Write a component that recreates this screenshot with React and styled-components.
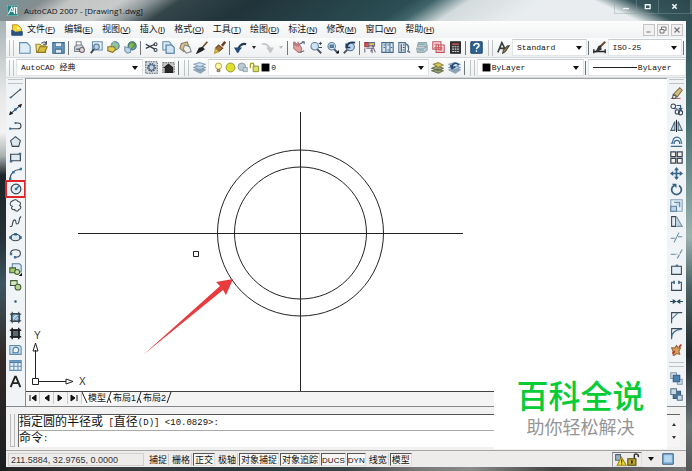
import React from "react";
import styled, { createGlobalStyle } from "styled-components";

const SANS = '"Liberation Sans", "Noto Sans CJK SC", sans-serif';
const MONO = '"Liberation Mono", "Noto Sans CJK SC", monospace';

const GlobalStyle = createGlobalStyle`
  *, *::before, *::after { box-sizing: border-box; }
  body { margin: 0; font-family: ${SANS}; color: #111; }
  button, select, input { font: inherit; color: inherit; margin: 0; padding: 0; border: 0; background: none; border-radius: 0; }
`;

const Frame = styled.div`
  position: relative;
  min-height: 100vh;
  display: flex;
  flex-direction: column;
  background:
    linear-gradient(#96a5a8, #e8e8e8 20%, #f2f2f2 28%, #a9b0b0 33%, #1c2528 37%, #243036 50%, #3d5560 60%, #332a28 75%, #1a1d1f) left / 6px 100% no-repeat,
    linear-gradient(#2c4b50, #466e70 25%, #9cb2ae 50%, #4e6668 60%, #20292c 75%, #6b7375 90%, #555) right / 6px 100% no-repeat,
    linear-gradient(90deg, #222, #3b3f40 15%, #2c3b3e 35%, #3a4547 50%, #777 60%, #8a8a8a 68%, #444 80%, #777) bottom / 100% 6px no-repeat,
    #2b3a3e;
  padding: 0 6px 6px;
`;

const TitleBar = styled.header`
  height: 21px;
  flex: none;
  margin: 0 -6px;
  display: flex;
  align-items: center;
  gap: 6px;
  padding-left: 7px;
  background:
    linear-gradient(25deg, transparent 56%, #35555a 72%, #2b474c) right / 180px 100% no-repeat,
    linear-gradient(147deg, #7b9296 2%, #848c8e 6%, #c3c5c5 10%, #c9cbcb 17%, #8d979a 21%, #35464b 25%, #20343a 35%, #2b4e54 57%, #40656a 60%, #d3dbdd 65%, #e9edef 75%);
`;

const Title = styled.h1`
  margin: 0;
  flex: 1;
  font: 400 8px/12px "Open Sans", sans-serif;
  color: #101517;
  white-space: nowrap;
`;

const Captions = styled.div`
  display: flex;
  align-self: flex-start;
  border: 1px solid #8d9fa366;
  border-top: 0;
`;

const CaptionButton = styled.button`
  width: ${(p) => (p.$wide ? 32 : 22)}px;
  height: 13px;
  display: grid;
  place-items: center;
  color: #f2f6f6;
  border-right: 1px solid #8d9fa366;
`;

const MenuBar = styled.nav`
  height: 17px;
  flex: none;
  display: flex;
  align-items: center;
  padding: 0 3px 0 5px;
  background: linear-gradient(#fdfdfd, #f0f2f3);
`;

const MenuList = styled.div`
  flex: 1;
  display: flex;
  gap: 9px;
  padding-left: 4px;
`;

const MenuButton = styled.button`
  font-size: 9px;
  line-height: 14px;
  white-space: nowrap;
`;

const Mnemonic = styled.span`
  font-size: 8px;
  u { text-underline-offset: 1px; }
`;

const DocButtons = styled.div`
  display: flex;
  gap: 2px;
`;

const DocButton = styled.button`
  width: 12px;
  height: 12px;
  display: grid;
  place-items: center;
  background: #f1f1f1;
  border: 1px solid #c4c4c4;
  color: #777;
`;

const ToolRow = styled.div`
  height: ${(p) => p.$height}px;
  flex: none;
  display: flex;
  align-items: center;
  overflow: hidden;
  background: linear-gradient(#fcfdfd, #eef0f1);
  border-bottom: 1px solid #d5d8da;
`;

const Group = styled.div`
  display: flex;
  align-items: center;
  flex: ${(p) => (p.$grow ? p.$grow : "none")};
  min-width: 0;
`;

const Grip = styled.i`
  flex: none;
  width: 5px;
  height: 16px;
  margin: 0 2px 0 3px;
  border: solid #bfc3c6;
  border-width: 0 1px;
`;

const SideGrip = styled.i`
  flex: none;
  height: 5px;
  margin: ${(p) => (p.$spaced ? "5px 2px 3px" : "1px 2px")};
  border: solid #bfc3c6;
  border-width: 1px 0;
`;

const Divider = styled.i`
  flex: none;
  width: 1px;
  height: 14px;
  margin: 0 2px 0 1px;
  background: #70767a;
`;

const Tool = styled.button`
  flex: none;
  width: ${(p) => (p.$narrow ? 10 : 17)}px;
  height: 16px;
  display: grid;
  place-items: center;
  outline: ${(p) => (p.$marked ? "2px solid #e0262d" : "none")};
  outline-offset: -1px;
  svg { display: block; }
`;

const Combo = styled.label`
  flex: ${(p) => p.$flex || "1"};
  min-width: 0;
  height: 17px;
  display: flex;
  align-items: center;
  gap: 1px;
  padding: 0 4px;
  background: #fff;
  border: 1px solid #e2e5e7;
  border-top-color: #c8ccd0;
`;

const ComboSelect = styled.select`
  flex: 1;
  min-width: 0;
  height: 15px;
  appearance: none;
  font-family: ${MONO};
  font-size: 8px;
  line-height: 15px;
`;

const Workspace = styled.main`
  flex: 1;
  min-height: 0;
  display: flex;
  border-bottom: 1px solid #85888a;
`;

const SideBar = styled.aside`
  flex: none;
  width: 19px;
  display: flex;
  flex-direction: column;
  align-items: stretch;
  background: #f0f4f7;
  button { width: 100%; }
`;

const DrawingPane = styled.section`
  flex: 1;
  min-width: 0;
  display: flex;
  flex-direction: column;
  border-left: 1px solid #868a8c;
  border-top: 1px solid #a2a5a6;
  background: #f4f4f4;
`;

const Canvas = styled.div`
  flex: 1;
  min-height: 0;
  overflow: hidden;
  background: #fff;
  border-bottom: 1px solid #444;
  svg { display: block; }
`;

const TabStrip = styled.div`
  flex: none;
  height: 14px;
  display: flex;
  align-items: flex-start;
`;

const NavButton = styled.button`
  width: 14px;
  height: 12px;
  display: grid;
  place-items: center;
  border-right: 1px solid #ccc;
`;

const LayoutTab = styled.button`
  height: 12px;
  display: flex;
  align-items: center;
  font-size: 9px;
  line-height: 11px;
  background: ${(p) => (p.$active ? "#fff" : "transparent")};
  svg { display: block; }
`;

const CommandPanel = styled.section`
  flex: none;
  display: flex;
  background: #f1f1f1;
  padding: 7px 6px 3px 4px;
  border-bottom: 1px solid #a5a5a5;
`;

const CommandGrip = styled.i`
  width: 5px;
  margin-right: 3px;
  border: solid #bbb;
  border-width: 0 1px 1px;
`;

const CommandBody = styled.div`
  flex: 1;
  min-width: 0;
  background: #fff;
  border-top: 1px solid #555;
  border-left: 1px solid #666;
`;

const CommandLine = styled.div`
  height: 16px;
  display: flex;
  align-items: center;
  font-family: ${MONO};
  font-size: 12px;
  line-height: 16px;
  white-space: pre;
  border-bottom: ${(p) => (p.$last ? "0" : "1px solid #aaa")};
  small { font-size: 9px; }
`;

const CommandInput = styled.input`
  flex: 1;
  min-width: 0;
  height: 14px;
  outline: none;
`;

const ScrollColumn = styled.div`
  width: 13px;
  border-top: 1px solid #666;
  display: flex;
  flex-direction: column;
  justify-content: space-evenly;
  background: #f5f5f5;
`;

const ScrollButton = styled.button`
  height: 8px;
  display: grid;
  place-items: center;
`;

const StatusBar = styled.footer`
  flex: none;
  height: 16px;
  display: flex;
  align-items: center;
  padding: 0 10px 0 2px;
  background: #eeecea;
  font-size: 9px;
  line-height: 13px;
  white-space: nowrap;
`;

const Coordinates = styled.output`
  width: 136px;
  height: 13px;
  padding-left: 2px;
  border: 1px solid #d2d0ce;
  color: #333;
`;

const StatusToggles = styled.div`
  flex: 1;
  display: flex;
  gap: 1px;
  padding-left: 3px;
`;

const StatusToggle = styled.button`
  height: 13px;
  padding: ${(p) => (p.$latin ? "0" : "0 1px")};
  min-width: ${(p) => (p.$latin ? 18 : 22)}px;
  font-size: ${(p) => (p.$latin ? 8 : 9)}px;
  border: 1px solid;
  border-color: ${(p) => (p.$on ? "#555 #ddd #ddd #555" : "transparent #ccc transparent transparent")};
  background: ${(p) => (p.$on ? "#f7f6f5" : "transparent")};
`;

const Tray = styled.div`
  display: flex;
  align-items: center;
  border: 1px solid;
  border-color: #777 #ddd #ddd #999;
  height: 15px;
  padding: 0 1px;
`;

const Watermark = styled.div`
  position: absolute;
  right: 25px;
  bottom: 24px;
  width: 173px;
  height: 70px;
  background: #fff;
  font-family: ${SANS};
  text-align: center;
  strong {
    display: block;
    font-size: 32px;
    line-height: 37px;
    font-weight: 500;
    color: #06cc38;
  }
  span {
    display: block;
    font-size: 18px;
    line-height: 24px;
    color: #959595;
  }
`;

const Svg = ({ children, size = 14, box = 16 }) => (
  <svg width={size} height={size} viewBox={`0 0 ${box} ${box}`} fill="none" stroke="#3a4650" strokeWidth="1.3" aria-hidden="true">
    {children}
  </svg>
);

const Caret = () => (
  <svg width="6" height="4" viewBox="0 0 6 4" aria-hidden="true"><path d="M0 0h6L3 4z" fill="#111" /></svg>
);

const SHEET = <path d="M2 2h9l4 4v9H2z" fill="#dcecf8" stroke="#5e8db5" />;
const LENS = <><path d="M10 10l5 5" stroke="#4a5560" strokeWidth="2.4" /><circle cx="7" cy="6.5" r="4.6" fill="#cfe4f5" stroke="#5d7f9e" /></>;
const LAYERS = <><path d="M1 11l7-2 7 2-6 4z" fill="#8ba4b8" stroke="#8ea3b3" /><path d="M1 8l7-3 7 3-6 3z" fill="#b4cade" stroke="#7f9ab3" /><path d="M1 4l7-2 7 2-6 3z" fill="#d5e4f2" stroke="#8ca8c2" /></>;

const ICONS = {
  logo: <><rect x="0" y="0" width="16" height="16" fill="#1e8583" stroke="#b8d8d4" /><path d="M2 13L7 3l3 8M5 9h5M11 2v11M14 3v10M9 4h5" stroke="#fff" strokeWidth="1.5" /></>,
  doc: <><path d="M2 1h7l5 5v8H2z" fill="#f5d335" stroke="#bc9a22" /><path d="M1 8l5 3 9-1v5H1z" fill="#28527f" stroke="#28527f" /><path d="M8 2l5 5H8z" fill="#fff3a4" stroke="none" /></>,
  blank: SHEET,
  open: <><path d="M1 4h5l2 2h5v8H2z" fill="#efdc78" stroke="#9a8b32" /><path d="M3 14l3-7h9l-3 7z" fill="#d8bd3d" stroke="#8d7a25" /><path d="M8 3c3-3 5-2 6 1M14 0v4h-4" stroke="#445" /></>,
  save: <><path d="M1 2h14v13H1z" fill="#6fa3c7" stroke="#31638a" /><path d="M4 2h8v5H4z" fill="#e5f0f7" stroke="#4d7998" /><path d="M4 10h8v5H4z" fill="#dfe9f0" stroke="#3f6a8a" /></>,
  print: <><path d="M4 1h6v6H4z" fill="#fff" stroke="#81868b" /><path d="M2 7l3-2h6l2 3v5H2z" fill="#ced4da" stroke="#7c858c" /><circle cx="11" cy="11" r="3" fill="#e0dfe1" stroke="#765e70" /><path d="M4 10h4" /></>,
  preview: <><path d="M3 1h12v10H3z" fill="#e5f2fc" stroke="#638bae" /><circle cx="8" cy="7" r="3.4" fill="#b6d1e7" stroke="#58758e" /><path d="M5 10l-4 5" strokeWidth="2.3" /></>,
  publish: <><circle cx="10" cy="6" r="5" fill="#79b4d6" stroke="#5b7d93" /><path d="M7 2c4 0 6 3 5 8M5 5h9" stroke="#a5cf66" /><path d="M1 7h7l3 3-4 4-6-2z" fill="#e5cd4d" stroke="#83752c" /></>,
  globe: <><circle cx="10" cy="6" r="5" fill="#68a7ba" stroke="#33677c" /><path d="M6 5c2-5 7-3 7 1-3 0-2 4-5 4" fill="#89b958" stroke="#608c3a" /><path d="M1 7l7 2v5l-4 1-3-3z" fill="#b9d5e6" stroke="#7295ab" /></>,
  cut: <><path d="M1 4l11 6M1 9l11-5" stroke="#353b40" strokeWidth="1.6" /><circle cx="13" cy="4" r="1.8" /><circle cx="13" cy="11" r="1.8" /></>,
  copy: <><path d="M1 1h8l2 2v8H1z" fill="#dcebf6" stroke="#648bad" /><path d="M5 5h7l3 3v7H5z" fill="#d0e4f3" stroke="#457397" /></>,
  paste: <><path d="M3 3l7-2 3 8-7 4-5-4z" fill="#d6c38b" stroke="#83775a" /><path d="M7 5l6 2 2 6-6 2-4-5z" fill="#f1f2ed" stroke="#83858a" /></>,
  brush: <><path d="M14 1L7 9" stroke="#6a4928" strokeWidth="2" /><path d="M8 8l-4 1-3 6 6-3 3-2z" fill="#222" stroke="#222" /></>,
  match: <><path d="M15 1l-4 5" stroke="#6d3a25" strokeWidth="3" /><path d="M7 5l5 4-5 4-4-4z" fill="#a66c3b" stroke="#704724" /><path d="M3 9l4 4-5 2z" fill="#e3cd4d" stroke="#b29732" /></>,
  undo: <><path d="M5 14C4 8 9 2 15 4" stroke="#233852" strokeWidth="2.6" /><path d="M0 8h10L4 15z" fill="#234a7d" stroke="none" /></>,
  redo: <><path d="M11 14C12 8 7 2 1 4" stroke="#c2c6ca" strokeWidth="2.2" /><path d="M6 8h10l-4 7z" fill="#c2c6ca" stroke="none" /></>,
  pan: <><path d="M2 2l4 5-3-6 5 5-1-5 5 8-1 5H8L2 9z" fill="#e0a09e" stroke="#b9777d" /><path d="M9 4l6-3M10 14l5-2M12 1h3v3" stroke="#52667b" /></>,
  zoomRt: <>{LENS}<path d="M12 3h4M14 1v4M12 8h4" strokeWidth="1.2" /></>,
  zoomWin: <>{LENS}<path d="M5 5h4v3H5z" fill="#6487a6" stroke="#4c6f8e" /><path d="M12 15h4v-4z" fill="#111" stroke="none" /></>,
  zoomPrev: <><path d="M6 10l-5 5" stroke="#4b5864" strokeWidth="2.4" /><circle cx="9" cy="7" r="5" fill="#b9d5ec" stroke="#516d87" /><path d="M5 7c1-5 5-6 10-5M4 3v5h5" stroke="#223c5d" strokeWidth="2" /></>,
  props: <><path d="M1 2h5v5H1z" fill="#da5055" stroke="#9a3642" /><path d="M6 2h7v4H6z" fill="#efc64a" stroke="#627495" /><path d="M3 9h7v6M1 9v5M10 5l4 9M13 5l-5 8" stroke="#6e647c" /></>,
  center: <><path d="M1 2h14v12H1z" fill="#d7e7f3" stroke="#46698b" /><path d="M6 2v12M11 2v12M3 5h2M8 5h2M3 8h2M12 8h2M8 11h2" stroke="#4e6f90" /></>,
  palettes: <><path d="M1 2h8v12H1z" fill="#e1edf6" stroke="#4e7494" /><path d="M4 4v9M6 5h2M6 8h2M6 11h2" /><path d="M9 3c5 1 5 6 3 10l3 1" fill="#9db6ca" stroke="#436582" /></>,
  sheets: <><path d="M4 2h10l1 4-4 1H3zM2 9h9l4-2v4l-4 3H3z" fill="#b9cfd6" stroke="#91a8ae" /><path d="M4 4h8M4 11h7" stroke="#7797a4" /></>,
  markup: <><path d="M1 1h10v9H1zM5 5h10v9H5z" fill="#f7dfe1" stroke="#c1525c" /><path d="M3 4h5v4H3M8 8h4v3H8z" stroke="#d06069" /></>,
  calc: <><rect x="2" y="1" width="12" height="14" fill="#39393c" stroke="#222" /><path d="M4 3h8v2H4z" fill="#bb5550" stroke="none" /><path d="M4 7h8M4 10h8M4 13h8" stroke="#ddd" strokeDasharray="2 1" /></>,
  help: <><rect x="1" y="1" width="14" height="14" rx="1" fill="#2b6598" stroke="#214567" /><path d="M5 6c0-4 7-4 6 0-1 2-3 2-3 4" stroke="#fff" strokeWidth="2" /><circle cx="8" cy="12.5" r="1" fill="#fff" stroke="none" /></>,
  textStyle: <><path d="M1 14L6 2l5 10M3 9h7" strokeWidth="2" stroke="#353c42" /><path d="M15 6l-5 7-3 2 1-4 5-5z" fill="#ab9250" stroke="#4c4433" /></>,
  dimStyle: <><path d="M1 13h14M1 10v5M15 10v5" stroke="#222" strokeWidth="1.7" /><path d="M15 1L8 8" stroke="#6b4d2d" strokeWidth="2.5" /><path d="M9 6l1 4-6 3 3-6z" fill="#343434" stroke="#333" /></>,
  gear: <><path d="M1 1h14v14H1z" fill="#d9dfe4" strokeDasharray="2 1" stroke="#55606b" /><circle cx="8" cy="8" r="4.500" stroke="#4a6078" strokeWidth="2" strokeDasharray="2 1" /><circle cx="8" cy="8" r="3.300" fill="#c3d4e2" stroke="#4f6880" /></>,
  home: <><path d="M1 2h14v12H1z" fill="#c9c9c9" stroke="#777" strokeDasharray="2 1" /><path d="M3 8l5-4 5 4v6H4V8z" fill="#292929" stroke="#222" /></>,
  layers: LAYERS,
  bulb: <><circle cx="8" cy="6" r="4.5" fill="#fff7ad" stroke="#b59b35" /><path d="M6 11h4v3H6z" fill="#b4a87a" stroke="#766e50" /></>,
  sun: <circle cx="8" cy="8" r="6.500" fill="#dede2c" stroke="#8b9035" />,
  freeze: <><circle cx="7" cy="7" r="5.5" fill="#b9cbd0" stroke="#829a9e" /><path d="M9 8h6v6H9z" fill="#cad5dc" stroke="#8b9fac" /></>,
  lock: <><path d="M2 9V4c0-3 5-3 5 0v5" stroke="#a6a51d" strokeWidth="2" /><path d="M6 6h8v8H6z" fill="#dce162" stroke="#86882b" /></>,
  swatch: <path d="M1 1h14v14H1z" fill="#000" stroke="none" />,
  layerPrev: <><path d="M1 12l7-2 7 2-6 3zM1 9l7-3 7 3-6 3z" fill="#9ca870" stroke="#687151" /><path d="M3 4l6-2 6 3-6 3z" fill="#d8c957" stroke="#8d8442" /></>,
  layerBack: <>{LAYERS}<path d="M5 8c-1-5 6-7 8-3M3 5l2 4 4-2" stroke="#264a73" strokeWidth="2" /></>,
  line: <><path d="M2 13L14 3" /><circle cx="2" cy="13" r="1.3" fill="#486b8b" stroke="none" /><circle cx="14" cy="3" r="1.3" fill="#486b8b" stroke="none" /></>,
  xline: <><path d="M1 14L15 2" strokeWidth="1.500" /><path d="M1 14l1-3 2 2zM15 2l-1 3-2-2z" fill="#222" stroke="#222" /><circle cx="8" cy="8" r="1.700" fill="#3173ab" stroke="none" /></>,
  pline: <><path d="M1 12h10c5 0 5-7 0-7H8" /><circle cx="8" cy="5" r="1.4" fill="#3173ab" stroke="none" /><circle cx="1.5" cy="12" r="1.4" fill="#3173ab" stroke="none" /></>,
  polygon: <path d="M8 2l6 5-2 7H4L2 7z" fill="#dce8ee" />,
  rect: <><path d="M2 4h12v8H2z" fill="#dfebf3" strokeWidth="1.5" /><path d="M1 11h3v3H1zM12 2h3v3h-3z" fill="#466a89" stroke="none" /></>,
  arc: <><path d="M1 15C2 7 7 3 14 3" /><path d="M0 13h3v3H0zM4 5h3v3H4zM13 1h3v3h-3z" fill="#3975a6" stroke="none" /></>,
  circle: <><circle cx="8" cy="8" r="6.500" fill="#e1ecf4" strokeWidth="1.600" /><path d="M8 8l4-4" stroke="#346e9d" strokeWidth="2" /><circle cx="8" cy="8" r="1.8" fill="#346e9d" stroke="none" /></>,
  cloud: <path d="M5 2c2-2 5-1 6 1 3 0 4 3 2 5 3 2 1 5-1 5-1 3-5 2-5 0-3 1-5-2-3-4-4-1-3-6 1-7z" fill="#f0f4f6" />,
  spline: <path d="M1 14c5 2 2-8 6-8 3 0 0 5 3 5 4 0 1-8 5-9" />,
  ellipse: <><ellipse cx="8" cy="8" rx="6" ry="4" fill="#dce9f2" strokeWidth="1.5" /><path d="M1 7h2v2H1zM13 7h2v2h-2zM7 3h2v2H7z" fill="#2f648c" stroke="#2f648c" /></>,
  ellArc: <><path d="M2 8c0-6 12-6 12 0 0 4-4 5-7 4" /><path d="M1 7h3v3H1zM6 11h3v3H6z" fill="#3f7199" stroke="none" /></>,
  insert: <><path d="M4 1h9l2 2v8H4z" fill="#dce9f3" stroke="#587e9d" /><path d="M1 6h7v6H1z" fill="#a4c873" stroke="#3d612b" /><circle cx="10" cy="11" r="3" fill="#cee0a8" stroke="#3c6230" /><path d="M12 16h4v-4z" fill="#111" stroke="none" /></>,
  block: <><path d="M2 2h8v6H2z" fill="#dae7c4" stroke="#42633a" /><circle cx="11" cy="10" r="3.600" fill="#b6d390" stroke="#42633a" /><path d="M1 8h6" /></>,
  point: <circle cx="8" cy="8" r="1.5" fill="#225c8d" stroke="none" />,
  hatch: <><path d="M3 3h10v10H3z" fill="#bcd8ed" /><path d="M1 4h14M1 12h14M4 1v14M12 1v14" /><path d="M4 8l4-4M5 12l7-7M9 12l3-3" stroke="#6c9bbd" /></>,
  gradient: <><path d="M3 3h10v10H3z" fill="#566c72" /><path d="M1 4h14M1 12h14M4 1v14M12 1v14" strokeWidth="1.800" stroke="#222" /></>,
  region: <><path d="M1 3h12l2 2v9H1z" fill="#c8ddec" stroke="#618db0" /><path d="M5 12V8a3.500 3.500 0 1 1 6 3v1z" fill="#eff6fb" stroke="#4b7797" /></>,
  table: <><path d="M1 2h14v12H1z" fill="#e5f0f8" stroke="#6390b5" /><path d="M1 4h14" stroke="#4a78a0" strokeWidth="2" /><path d="M1 9h14M6 2v12M11 2v12" stroke="#6390b5" /></>,
  erase: <><path d="M1 14h12" stroke="#b66058" /><path d="M5 8l7-7 3 3-6 8z" fill="#d2c082" stroke="#806d44" /><path d="M4 9l4 3-2 2H3z" fill="#fff" stroke="#555" /></>,
  copyObj: <><circle cx="4" cy="4" r="2.800" /><circle cx="9" cy="11" r="2.600" /><circle cx="13" cy="12" r="2.600" /><path d="M5 7h4M8 3h5v5M11 6l2 3 2-3" stroke="#345b79" /></>,
  mirror: <><path d="M6 3v11H1zM10 3v11h5z" fill="#c7dce9" stroke="#46657c" /><path d="M8 1v15" stroke="#222" /></>,
  offset: <><path d="M1 10h2c0-10 11-10 11 0h1" stroke="#386b91" strokeWidth="1.600" /><path d="M1 14h14M5 11c0-6 7-6 7 0" stroke="#386b91" strokeWidth="1.600" /></>,
  array: <path d="M1 1h6v6H1zM9 1h6v6H9zM1 9h6v6H1zM9 9h6v6H9z" fill="#f1f1ed" strokeWidth="1.5" />,
  move: <><path d="M8 2v12M2 8h12" stroke="#376488" strokeWidth="2" /><path d="M8 0l3 4H5zM8 16l3-4H5zM0 8l4-3v6zM16 8l-4-3v6z" fill="#376488" stroke="none" /></>,
  rotate: <><path d="M5 3a6 6 0 1 0 6 0" stroke="#376381" strokeWidth="2.2" /><path d="M2 1h6v5z" fill="#376381" stroke="none" /></>,
  scale: <><path d="M1 1h14v14H1z" fill="#e4eff8" stroke="#86a2b8" /><path d="M1 9h7v6H1zM5 4h7v6" fill="#c2d5e4" stroke="#577f9e" /></>,
  stretch: <><path d="M2 2h5v12H2z" fill="#e5eff6" /><path d="M8 2l7 12H8" fill="#c2d7e5" stroke="#7695aa" /></>,
  trim: <path d="M1 9h5M10 7h5M11 2L5 14" stroke="#6488a2" />,
  extend: <path d="M1 9h8M15 3L9 14" stroke="#6488a2" strokeDasharray="6 1" />,
  breakPt: <><path d="M2 4h12v10H2z" fill="#e2eef7" /><path d="M7 2h3v3H7z" fill="#447195" stroke="none" /></>,
  breakObj: <><path d="M5 4H2v10h12V4h-3" fill="#eef5fb" /><path d="M4 2h2v4H4zM10 2h2v4h-2z" fill="#396889" stroke="none" /></>,
  join: <path d="M0 8h5M16 8h-5M4 6l3 2-3 2zM12 6L9 8l3 2z" fill="#294a64" stroke="#294a64" />,
  chamfer: <><path d="M2 15V2h13" /><path d="M2 10l8-8" stroke="#4b7595" /></>,
  fillet: <><path d="M2 15V2h13" /><path d="M2 13C2 7 7 3 14 3" stroke="#37698e" strokeWidth="1.600" /></>,
  explode: <><path d="M2 6l4 0 2-3 2 3 3 0-2 4 1 4-4-1-4 3 0-5z" fill="#d9a05b" stroke="#a06a3c" /><path d="M3 13l3-3M11 5l3-3" stroke="#b6332b" strokeWidth="2" /></>,
  front: <><path d="M1 1h7v7H1zM9 9h6v6H9z" fill="#d8e3eb" stroke="#8597a6" /><path d="M4 4h8v8H4z" fill="#4e7eb1" stroke="#315c88" /></>,
  back: <><path d="M4 4h9v9H4z" fill="#477298" stroke="#355d80" /><path d="M1 1h7v7H1zM9 9h6v6H9z" fill="#c9dae7" stroke="#55758f" /></>,
  warn: <><path d="M2 2h6v7H2z" fill="#9bb1c3" stroke="#51677a" /><path d="M9 5l6 10H4z" fill="#f4de28" stroke="#9a861b" /><path d="M9.500 8v4M9.500 13v1" stroke="#222" /></>,
  unlock: <><path d="M9 7V3c0-3 6-2 5 2" stroke="#333" strokeWidth="1.8" /><path d="M1 7h10v8H1z" fill="#bba428" stroke="#50480f" /><path d="M6 9v4" stroke="#222" strokeWidth="2" /></>,
  clean: <><path d="M1 1h14v14H1z" fill="#89b8dc" stroke="#315b7b" /><path d="M3 3h10v9H3z" fill="#b7d9f0" stroke="none" /></>,
};

const Icon = ({ name, size }) => <Svg size={size}>{ICONS[name]}</Svg>;

const IconTool = ({ name, label, marked }) => (
  <Tool type="button" aria-label={label || name} $marked={marked}>
    <Icon name={name} size={marked ? 12 : 13} />
  </Tool>
);

const Drop = ({ label, text, icons = [], flex }) => (
  <Combo $flex={flex}>
    {icons.map((n) => <Icon key={n} name={n} size={n === "swatch" ? 9 : 11} />)}
    <ComboSelect aria-label={label} defaultValue={text}><option>{text}</option></ComboSelect>
    <Caret />
  </Combo>
);

const MENUS = [["文件", "F"], ["编辑", "E"], ["视图", "V"], ["插入", "I"], ["格式", "O"], ["工具", "T"], ["绘图", "D"], ["标注", "N"], ["修改", "M"], ["窗口", "W"], ["帮助", "H"]];
const STANDARD = [["blank", "open", "save"], ["print", "preview", "publish", "globe"], ["cut", "copy", "paste", "brush", "match"]];
const VIEW = [["pan", "zoomRt", "zoomWin", "zoomPrev"], ["props", "center", "palettes", "sheets", "markup", "calc"]];
const DRAW = ["line", "xline", "pline", "polygon", "rect", "arc", "circle", "cloud", "spline", "ellipse", "ellArc", "insert", "block", "point", "hatch", "gradient", "region", "table"];
const MODIFY = ["erase", "copyObj", "mirror", "offset", "array", "move", "rotate", "scale", "stretch", "trim", "extend", "breakPt", "breakObj", "join", "chamfer", "fillet", "explode"];
const TOGGLES = [["捕捉", false], ["栅格", false], ["正交", true], ["极轴", false], ["对象捕捉", true], ["对象追踪", true], ["DUCS", true, true], ["DYN", true, true], ["线宽", false], ["模型", true]];
const NAV = [["第一个", "M3 1v6M9 1v6L5 4z"], ["上一个", "M8 1v6L4 4z"], ["下一个", "M3 1v6l4-3z"], ["最后一个", "M8 1v6M2 1v6l4-3z"]];

const ToolGroups = ({ groups }) => groups.map((g) => (
  <React.Fragment key={g[0]}>
    {g.map((n) => <IconTool key={n} name={n} />)}
    <Divider />
  </React.Fragment>
));

const Drawing = () => (
  <svg width="100%" height="312" role="img" aria-label="Drawing1" fill="none" stroke="#222">
    <path d="M52 154.500H437M274.500 33V312" />
    <circle cx="274.500" cy="154" r="83" />
    <circle cx="274.500" cy="154" r="66" />
    <path d="M167.500 172.500h5v5h-5z" />
    <path d="M117 276L194 207L190 203L207 200L200 216L197 211Z" fill="#e83b3d" stroke="none" />
    <path d="M6.500 299.500h6v6h-6zM9.500 299V271M7 272l2.500-8 2.500 8zM13 302.500h27M40 300l7 2.500-7 2.500z" />
    <g fill="#333" stroke="none" fontFamily="Liberation Sans, sans-serif" fontSize="10">
      <text x="8" y="260">Y</text>
      <text x="53" y="306">X</text>
    </g>
  </svg>
);

export default function App() {
  return (
    <Frame>
      <GlobalStyle />
      <TitleBar>
        <Icon name="logo" size={11} />
        <Title>AutoCAD 2007 - [Drawing1.dwg]</Title>
        <Captions>
          <CaptionButton aria-label="最小化"><Svg size={8}><path d="M2 11h12" stroke="currentColor" strokeWidth="2.500" /></Svg></CaptionButton>
          <CaptionButton aria-label="最大化"><Svg size={7}><path d="M3 4h11v9H3z" stroke="currentColor" strokeWidth="3" /></Svg></CaptionButton>
          <CaptionButton aria-label="关闭" $wide><Svg size={7}><path d="M3 3l10 10M13 3L3 13" stroke="currentColor" strokeWidth="3.500" /></Svg></CaptionButton>
        </Captions>
      </TitleBar>

      <MenuBar>
        <Icon name="doc" size={12} />
        <MenuList>
          {MENUS.map(([t, k]) => (
            <MenuButton key={k} type="button">{t}<Mnemonic>(<u>{k}</u>)</Mnemonic></MenuButton>
          ))}
        </MenuList>
        <DocButtons>
          <DocButton aria-label="最小化文档"><Svg size={8}><path d="M3 12h8" stroke="currentColor" strokeWidth="2" /></Svg></DocButton>
          <DocButton aria-label="还原文档"><Svg size={8}><path d="M5 6V2h9v7h-3M2 7h8v7H2z" stroke="currentColor" strokeWidth="2" /></Svg></DocButton>
          <DocButton aria-label="关闭文档"><Svg size={8}><path d="M3 3l10 10M13 3L3 13" stroke="currentColor" strokeWidth="2.500" /></Svg></DocButton>
        </DocButtons>
      </MenuBar>

      <ToolRow $height={20}>
        <Group role="toolbar" aria-label="标准">
          <Grip />
          <ToolGroups groups={STANDARD} />
          <IconTool name="undo" label="放弃" />
          <Tool type="button" $narrow aria-label="放弃列表"><svg width="4" height="3" viewBox="0 0 4 3"><path d="M0 0h4L2 3z" fill="#222" /></svg></Tool>
          <IconTool name="redo" label="重做" />
          <Tool type="button" $narrow aria-label="重做列表"><svg width="4" height="3" viewBox="0 0 4 3"><path d="M0 0h4L2 3z" fill="#bbb" /></svg></Tool>
          <Divider />
          <ToolGroups groups={VIEW} />
          <IconTool name="help" label="帮助" />
        </Group>
        <Group role="toolbar" aria-label="样式" $grow="1">
          <Grip />
          <IconTool name="textStyle" label="文字样式" />
          <Drop label="文字样式" text="Standard" />
          <Divider />
          <IconTool name="dimStyle" label="标注样式" />
          <Drop label="标注样式" text="ISO-25" />
          <Divider />
        </Group>
      </ToolRow>

      <ToolRow $height={20}>
        <Group $grow="175" role="toolbar" aria-label="工作空间">
          <Grip />
          <Drop label="工作空间" text="AutoCAD 经典" />
          <IconTool name="gear" label="工作空间设置" />
          <IconTool name="home" label="我的工作空间" />
          <Divider />
        </Group>
        <Group $grow="285" role="toolbar" aria-label="图层">
          <Grip />
          <IconTool name="layers" label="图层特性" />
          <Drop label="图层" text="0" icons={["bulb", "sun", "freeze", "lock", "swatch"]} />
          <IconTool name="layerPrev" label="置为当前" />
          <IconTool name="layerBack" label="上一个图层" />
          <Divider />
        </Group>
        <Group $grow="219" role="toolbar" aria-label="特性">
          <Grip />
          <Drop flex="108" label="颜色" text="ByLayer" icons={["swatch"]} />
          <Divider />
          <Combo $flex="98">
            <svg width="44" height="3" viewBox="0 0 44 3" aria-hidden="true"><path d="M0 1.500h44" stroke="#222" /></svg>
            <ComboSelect aria-label="线型" defaultValue="ByLayer"><option>ByLayer</option></ComboSelect>
          </Combo>
        </Group>
      </ToolRow>

      <Workspace>
        <SideBar role="toolbar" aria-label="绘图">
          <SideGrip />
          {DRAW.map((n) => <IconTool key={n} name={n} marked={n === "circle"} />)}
          <Tool type="button" aria-label="多行文字"><Svg size={13}><path d="M2 15L7.500 2h1L14 15M4.500 10h7" stroke="#222" strokeWidth="2.300" /></Svg></Tool>
        </SideBar>
        <DrawingPane>
          <Canvas><Drawing /></Canvas>
          <TabStrip>
            {NAV.map(([label, d]) => (
              <NavButton key={label} type="button" aria-label={label}>
                <svg width="11" height="8" viewBox="0 0 11 8"><path d={d} fill="#111" stroke="#111" strokeWidth="1" /></svg>
              </NavButton>
            ))}
            {["模型", "布局1", "布局2"].map((t, i) => (
              <LayoutTab key={t} type="button" $active={i === 0}>
                {i === 0 && <svg width="6" height="12" viewBox="0 0 6 12"><path d="M0 0l5 11" stroke="#222" /></svg>}
                {t}
                <svg width="7" height="12" viewBox="0 0 7 12" fill="none"><path d={i < 2 ? "M1 11L5 0M3 6l2 5" : "M1 11L5 0"} stroke="#222" /></svg>
              </LayoutTab>
            ))}
          </TabStrip>
        </DrawingPane>
        <SideBar role="toolbar" aria-label="修改">
          <SideGrip />
          {MODIFY.map((n) => <IconTool key={n} name={n} />)}
          <SideGrip $spaced />
          <IconTool name="front" label="前置" />
          <IconTool name="back" label="后置" />
        </SideBar>
      </Workspace>

      <CommandPanel>
        <CommandGrip />
        <CommandBody>
          <CommandLine>指定圆的半径或<small> [</small>直径<small>(D)] &lt;10.0829&gt;:</small></CommandLine>
          <CommandLine as="label" $last>命令<small>: </small><CommandInput aria-label="命令" /></CommandLine>
        </CommandBody>
        <ScrollColumn>
          <ScrollButton type="button" aria-label="向上滚动"><svg width="4" height="3" viewBox="0 0 4 3"><path d="M0 3h4L2 0z" fill="#333" /></svg></ScrollButton>
          <ScrollButton type="button" aria-label="向下滚动"><svg width="4" height="3" viewBox="0 0 4 3"><path d="M0 0h4L2 3z" fill="#333" /></svg></ScrollButton>
        </ScrollColumn>
      </CommandPanel>

      <StatusBar>
        <Coordinates>211.5884, 32.9765, 0.0000</Coordinates>
        <StatusToggles>
          {TOGGLES.map(([t, on, latin]) => <StatusToggle key={t} type="button" aria-pressed={on} $on={on} $latin={latin}>{t}</StatusToggle>)}
        </StatusToggles>
        <Tray><Icon name="warn" size={13} /><Icon name="unlock" size={13} /></Tray>
        <Tool type="button" aria-label="状态栏菜单"><Caret /></Tool>
        <Tool type="button" aria-label="全屏显示"><Icon name="clean" size={12} /></Tool>
      </StatusBar>

      <Watermark>
        <strong>百科全说</strong>
        <span>助你轻松解决</span>
      </Watermark>
    </Frame>
  );
}
